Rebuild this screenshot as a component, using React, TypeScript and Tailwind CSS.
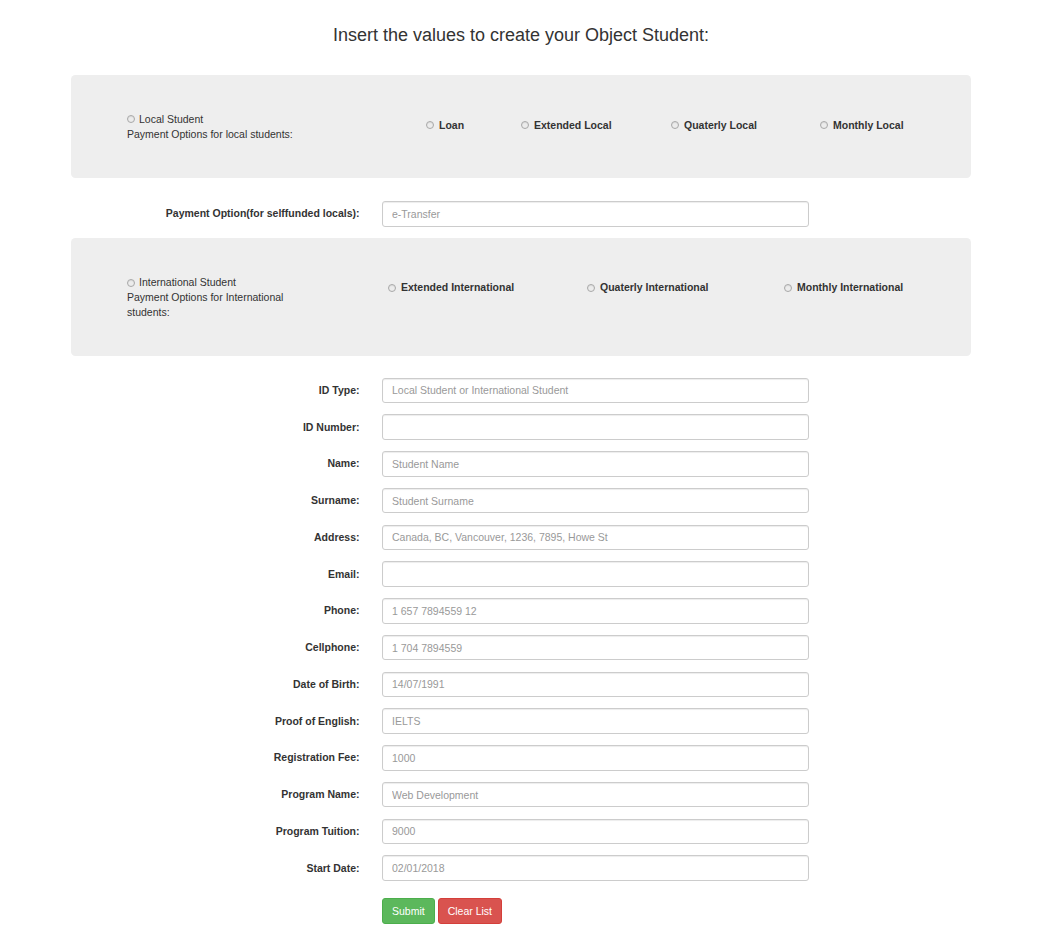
import React from "react";

function Radio() {
  return (
    <span className="inline-block w-[8px] h-[8px] rounded-full border border-[#a8a8a8] bg-[#ececec] shrink-0 shadow-[inset_0_1px_1px_rgba(0,0,0,0.08)]" />
  );
}

function Option({ label, w }: { label: string; w?: string }) {
  return (
    <div className={`flex items-center gap-[5px] font-bold ${w ?? ""}`}>
      <Radio />
      <span>{label}</span>
    </div>
  );
}

function Row({ label, placeholder }: { label: string; placeholder?: string }) {
  return (
    <div className="flex items-center">
      <label className="w-[288.5px] text-right font-bold shrink-0">{label}</label>
      <input
        className="ml-[22.5px] w-[427px] h-[25.5px] border border-[#ccc] rounded-[3px] px-[9px] text-[10.5px] text-[#555] placeholder:text-[#999] bg-white shadow-[inset_0_1px_1px_rgba(0,0,0,0.075)] outline-none"
        placeholder={placeholder}
      />
    </div>
  );
}

export default function App() {
  const rows: [string, string | undefined][] = [
    ["ID Type:", "Local Student or International Student"],
    ["ID Number:", undefined],
    ["Name:", "Student Name"],
    ["Surname:", "Student Surname"],
    ["Address:", "Canada, BC, Vancouver, 1236, 7895, Howe St"],
    ["Email:", undefined],
    ["Phone:", "1 657 7894559 12"],
    ["Cellphone:", "1 704 7894559"],
    ["Date of Birth:", "14/07/1991"],
    ["Proof of English:", "IELTS"],
    ["Registration Fee:", "1000"],
    ["Program Name:", "Web Development"],
    ["Program Tuition:", "9000"],
    ["Start Date:", "02/01/2018"],
  ];
  return (
    <div className="min-h-[940px] bg-white text-[#333] text-[10.5px] leading-[15px] font-['Liberation_Sans',Arial,sans-serif]">
      <div className="ml-[71px] w-[900px]">
        <h3 className="pt-[25px] text-center text-[18px] leading-[20px] font-normal">
          Insert the values to create your Object Student:
        </h3>

        <div className="mt-[30px] bg-[#eee] rounded-[4.5px] py-[36.5px] pl-[56px] flex items-start">
          <div className="w-[185px] shrink-0">
            <div className="flex items-center gap-[4px]">
              <Radio />
              <span>Local Student</span>
            </div>
            <div>Payment Options for local students:</div>
          </div>
          <div className="ml-[114px] mt-[6px] flex">
            <Option label="Loan" w="w-[95px]" />
            <Option label="Extended Local" w="w-[150px]" />
            <Option label="Quaterly Local" w="w-[149px]" />
            <Option label="Monthly Local" />
          </div>
        </div>

        <div className="mt-[23px]">
          <Row label="Payment Option(for selffunded locals):" placeholder="e-Transfer" />
        </div>

        <div className="mt-[11px] bg-[#eee] rounded-[4.5px] pt-[37.5px] pb-[35.5px] pl-[56px] flex items-start">
          <div className="w-[185px] shrink-0">
            <div className="flex items-center gap-[4px]">
              <Radio />
              <span>International Student</span>
            </div>
            <div>Payment Options for International students:</div>
          </div>
          <div className="ml-[76px] mt-[5px] flex">
            <Option label="Extended International" w="w-[199px]" />
            <Option label="Quaterly International" w="w-[197px]" />
            <Option label="Monthly International" />
          </div>
        </div>

        <div className="mt-[22px] flex flex-col gap-[11.25px]">
          {rows.map(([l, p]) => (
            <Row key={l} label={l} placeholder={p} />
          ))}
        </div>

        <div className="mt-[17.5px] ml-[311px] flex gap-[3px]">
          <button className="h-[25.5px] px-[9px] border border-[#4cae4c] bg-[#5cb85c] text-white rounded-[3px] text-[10.5px]">
            Submit
          </button>
          <button className="h-[25.5px] px-[9px] border border-[#d43f3a] bg-[#d9534f] text-white rounded-[3px] text-[10.5px]">
            Clear List
          </button>
        </div>
      </div>
    </div>
  );
}
